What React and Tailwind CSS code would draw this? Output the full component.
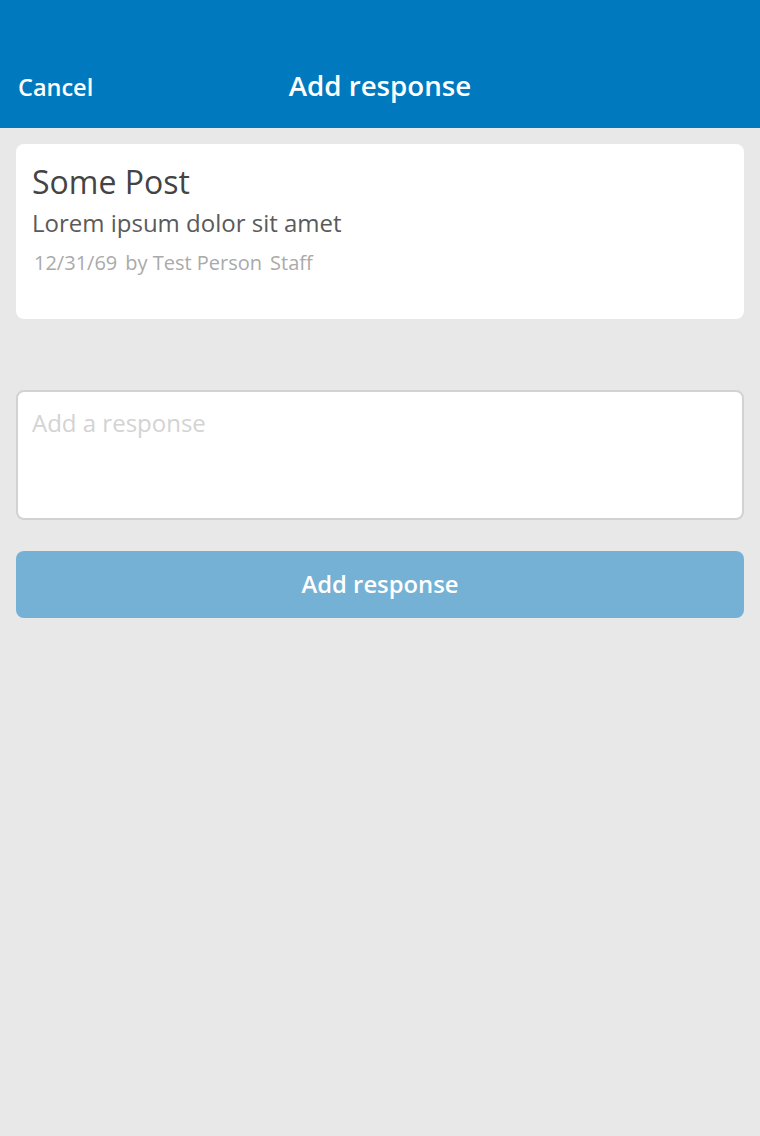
export default function App() {
  return (
    <div className="min-h-[1136px] w-[760px] bg-[#e8e8e8]" style={{ fontFamily: '"Open Sans", sans-serif' }}>
      <div className="grid h-[128px] grid-cols-[1fr_auto_1fr] items-baseline bg-[#0079be] pt-[67px]">
        <div className="pl-[18px] text-[23.5px] font-semibold leading-[32px] text-white">Cancel</div>
        <div className="text-[27.7px] font-semibold leading-[36px] text-white">Add response</div>
        <div />
      </div>
      <div className="px-[16px] pt-[16px]">
        <div className="h-[175px] rounded-[8px] bg-white px-[16px] pt-[18px]">
          <div className="text-[32px] leading-[40px] text-[#444444]">Some Post</div>
          <div className="mt-[5px] text-[24px] leading-[32px] text-[#5a5a5a]">Lorem ipsum dolor sit amet</div>
          <div className="mt-[10px] flex gap-[8px] pl-[2px] text-[20px] leading-[28px] text-[#aaaaaa]">
            <span>12/31/69</span>
            <span>by Test Person</span>
            <span>Staff</span>
          </div>
        </div>
        <div className="mt-[71px] h-[130px] rounded-[8px] border-2 border-[#d2d2d2] bg-white px-[14px] pt-[15px]">
          <div className="text-[24px] leading-[32px] text-[#d3d3d3]">Add a response</div>
        </div>
        <button className="mt-[31px] flex h-[67px] w-full items-center justify-center rounded-[8px] bg-[#75b1d5] text-[23.8px] font-semibold text-white">
          Add response
        </button>
      </div>
    </div>
  );
}
